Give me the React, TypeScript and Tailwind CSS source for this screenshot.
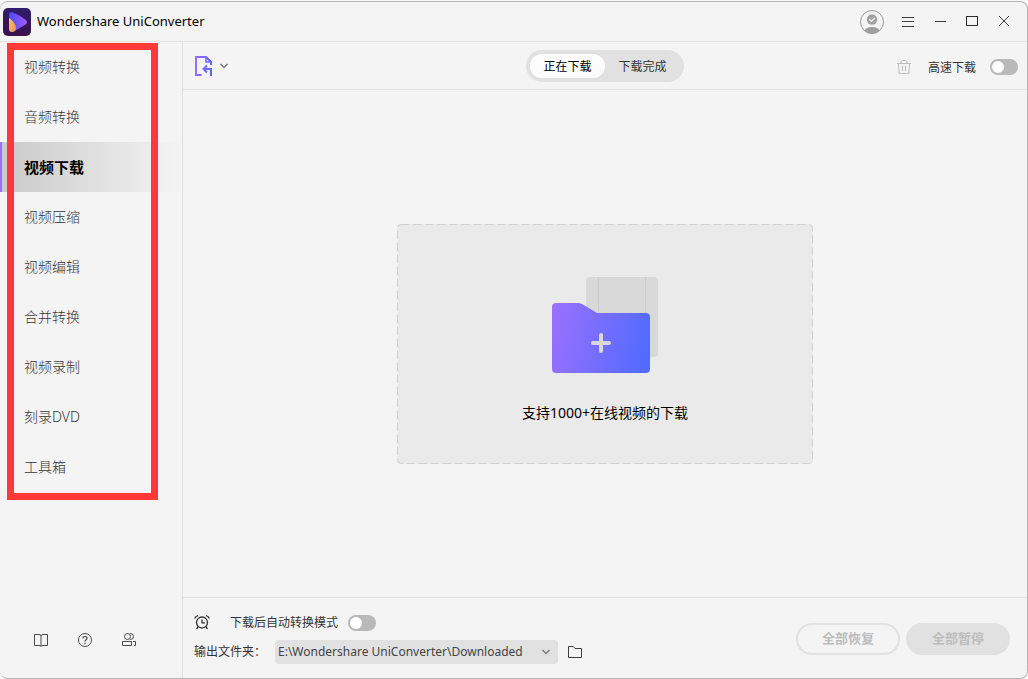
import { useState } from "react";

const NAV_ITEMS = [
  "视频转换",
  "音频转换",
  "视频下载",
  "视频压缩",
  "视频编辑",
  "合并转换",
  "视频录制",
  "刻录DVD",
  "工具箱",
];

const Logo = () => (
  <svg width="28" height="28" viewBox="0 0 28 28" aria-hidden="true">
    <defs>
      <linearGradient id="logoBg" x1="0" y1="0" x2="0" y2="1">
        <stop offset="0" stopColor="#2f1c6c" />
        <stop offset="1" stopColor="#3a124a" />
      </linearGradient>
      <linearGradient id="logoPlay" x1="0" y1="0" x2="1" y2="0">
        <stop offset="0" stopColor="#4a4bf5" />
        <stop offset="1" stopColor="#a45cff" />
      </linearGradient>
      <linearGradient id="logoDrop" x1="0" y1="0" x2="1" y2="1">
        <stop offset="0" stopColor="#ffc46b" />
        <stop offset="1" stopColor="#f09050" />
      </linearGradient>
    </defs>
    <rect width="28" height="28" rx="5" fill="url(#logoBg)" />
    <path d="M8 4.200Q6 4.200 6 7v14.500Q6 24 8.500 24q1.500 0 4-1.400L22.600 16.500q2.800-2.300 0-4.700Q16 7 10 4.600 9 4.200 8 4.200Z" fill="url(#logoPlay)" />
    <path d="M6 10c3 2 7 6.500 7 10 0 2.500-1.700 4-3.700 4-2.200 0-3.300-1.300-3.300-3.500Z" fill="url(#logoDrop)" />
  </svg>
);

const Avatar = () => (
  <svg width="24" height="24" viewBox="0 0 24 24" aria-hidden="true">
    <defs>
      <clipPath id="avatarClip">
        <circle cx="12" cy="12" r="11.500" />
      </clipPath>
    </defs>
    <g clipPath="url(#avatarClip)" fill="#a0a0a0">
      <circle cx="12" cy="9.500" r="5.200" />
      <ellipse cx="12" cy="22" rx="8" ry="5" />
    </g>
    <path d="m9.300 9.300 2.200 2 3.500-3.200" fill="none" stroke="#f4f4f4" strokeWidth="1.300" />
    <circle cx="12" cy="12" r="11.500" fill="none" stroke="#999" />
  </svg>
);

const AddFile = () => (
  <svg width="18" height="22" viewBox="0 0 18 22" fill="none" strokeWidth="2" aria-hidden="true">
    <defs>
      <linearGradient id="fileStroke" x1="0" y1="0" x2="18" y2="0" gradientUnits="userSpaceOnUse">
        <stop offset="0" stopColor="#9a70ff" />
        <stop offset="1" stopColor="#5a62fa" />
      </linearGradient>
    </defs>
    <g stroke="url(#fileStroke)">
      <path d="M6.500 20H1V2h10l5 5v3" />
      <path d="M11 2v5h5" strokeWidth="1.500" />
      <path d="m12 10.500-3.500 3.500 3.500 3.500M9 14h7v7" />
    </g>
  </svg>
);

const Chevron = () => (
  <svg width="8" height="6" viewBox="0 0 8 6" fill="none" stroke="#7a7a7a" strokeWidth="1.500" aria-hidden="true">
    <path d="m.5 1 3.500 3.500L7.500 1" />
  </svg>
);

const Trash = () => (
  <svg width="14" height="14" viewBox="0 0 14 14" fill="none" stroke="#bdbdbd" aria-hidden="true">
    <path d="M0 3.500h14M4 3.500V2q0-1.500 1.500-1.500h3Q10 .5 10 2v1.500M1.500 3.500l.6 10h9.800l.6-10M5.500 6v5M8.500 6v5" />
  </svg>
);

const Clock = () => (
  <svg width="16" height="16" viewBox="0 0 16 16" fill="none" stroke="#333" strokeWidth="1.300" aria-hidden="true">
    <circle cx="8" cy="7.500" r="5.500" />
    <path d="M8 4.500v3.300h3M.7 3.500Q1.500 1.300 4 .7M15.300 3.500Q14.500 1.300 12 .7M4.300 11.500 2.500 14M11.700 11.500l1.800 2.500" />
  </svg>
);

const Book = () => (
  <svg width="14" height="14" viewBox="0 0 14 14" fill="none" stroke="#4a4a4a" aria-hidden="true">
    <path d="M.5 1.500H5q2 0 2 1.500 0-1.500 2-1.500h4.500v11H9q-2 0-2 1 0-1-2-1H.5ZM7 3v10" />
  </svg>
);

const Help = () => (
  <svg width="14" height="14" viewBox="0 0 14 14" fill="none" stroke="#4a4a4a" aria-hidden="true">
    <circle cx="7" cy="7" r="6.500" />
    <path d="M5 5.500q0-2 2-2t2 1.800C9 6.700 7 6.700 7 8.500M7 9.800v1.400" strokeWidth="1.200" />
  </svg>
);

const Users = () => (
  <svg width="14" height="14" viewBox="0 0 14 14" fill="none" stroke="#4a4a4a" aria-hidden="true">
    <circle cx="5.500" cy="3.500" r="3" />
    <path d="M8 .5h.5a3 3 0 0 1 0 6H8M.5 12.500v-4h9v4ZM11 8.500h2.500v4H12" />
  </svg>
);

const FolderOutline = () => (
  <svg width="14" height="12" viewBox="0 0 14 12" fill="none" stroke="#3f3f3f" aria-hidden="true">
    <path d="M.5 11.500V.5h4.800L7 2.500h6.500v9Z" />
  </svg>
);

const FolderArt = () => (
  <svg width="106" height="96" viewBox="0 0 106 96" aria-hidden="true">
    <defs>
      <linearGradient id="folderFill" x1="0" y1="40" x2="98" y2="60" gradientUnits="userSpaceOnUse">
        <stop offset="0" stopColor="#9a70ff" />
        <stop offset="1" stopColor="#526bff" />
      </linearGradient>
    </defs>
    <rect x="34" width="72" height="80" rx="4" fill="#d8d8d8" />
    <path d="M46.500 0v80M93.500 0v80" stroke="#cccccc" />
    <path d="M4 26h22q3 0 5 1.500L45 36h49q4 0 4 4v52q0 4-4 4H4q-4 0-4-4V30q0-4 4-4Z" fill="url(#folderFill)" />
    <path d="M49 58v16M41 66h16" stroke="#d8d8d8" strokeWidth="4" strokeLinecap="round" />
  </svg>
);

type SwitchProps = { id: string };

const Switch = ({ id }: SwitchProps) => (
  <input
    id={id}
    type="checkbox"
    className="flex h-4 w-7 shrink-0 appearance-none items-center rounded-full bg-[#b9b9b9] px-0.5 before:size-3 before:rounded-full before:bg-white checked:bg-[#7c6cff] checked:before:ml-auto"
  />
);

const TitleBar = () => (
  <header className="flex h-10 shrink-0 items-center border-b border-[#e0e0e0] pr-[17px] pl-[3px]">
    <Logo />
    <h1 className="ml-1.5 text-[13px] font-normal text-black">Wondershare UniConverter</h1>
    <div className="ml-auto flex items-center">
      <button aria-label="账户"><Avatar /></button>
      <button aria-label="菜单" className="ml-[18px]">
        <svg width="12" height="12" stroke="#3c3c3c"><path d="M0 1.500h12M0 5.500h12M0 10.500h12" /></svg>
      </button>
      <button aria-label="最小化" className="ml-5">
        <svg width="12" height="12" stroke="#3c3c3c"><path d="M1 5.500h11" /></svg>
      </button>
      <button aria-label="最大化" className="ml-5">
        <svg width="12" height="12" fill="none" stroke="#2c2c2c"><rect x=".5" y=".5" width="11" height="9" /></svg>
      </button>
      <button aria-label="关闭" className="ml-5">
        <svg width="12" height="12" stroke="#3c3c3c"><path d="m1 0 10 10M11 0 1 10" /></svg>
      </button>
    </div>
  </header>
);

const Sidebar = () => {
  const [active, setActive] = useState("视频下载");

  return (
    <aside className="flex w-[183px] shrink-0 flex-col border-r border-[#e0e0e0]">
      <nav className="relative">
        <ul>
          {NAV_ITEMS.map((item) => (
            <li key={item}>
              <button
                onClick={() => setActive(item)}
                className={
                  item === active
                    ? "flex h-[50px] w-full items-center border-l-2 border-[#9370ff] bg-linear-to-r from-[#cacaca] to-[#f4f4f4] pl-[22px] text-[15px] font-bold text-black"
                    : "flex h-[50px] w-full items-center pl-6 text-sm font-light text-[#333]"
                }
              >
                {item}
              </button>
            </li>
          ))}
        </ul>
        {/* highlight frame */}
        <div className="pointer-events-none absolute top-px -bottom-2 left-[7px] w-[151px] border-[7px] border-[#ff3838]" />
      </nav>
      <div className="mt-auto flex gap-[30px] pb-[31px] pl-[34px]">
        <button aria-label="用户指南"><Book /></button>
        <button aria-label="帮助"><Help /></button>
        <button aria-label="社区"><Users /></button>
      </div>
    </aside>
  );
};

const Toolbar = () => (
  <div className="grid h-12 shrink-0 grid-cols-[1fr_auto_1fr] items-center border-b border-[#e0e0e0] px-[9px] text-xs">
    <button aria-label="添加下载" className="flex items-center gap-[7px] pl-[3px]">
      <AddFile />
      <Chevron />
    </button>
    <div className="flex h-8 items-center rounded-full bg-[#e1e1e1] p-1">
      <button className="h-6 w-[75px] rounded-full bg-[#fcfcfc] pt-0.5 text-black">正在下载</button>
      <button className="h-6 w-[75px] pt-0.5 text-[#333]">下载完成</button>
    </div>
    <div className="flex items-center justify-end pt-0.5">
      <button aria-label="删除"><Trash /></button>
      <label htmlFor="fast" className="mr-3.5 ml-[17px] pt-0.5 text-[#333]">高速下载</label>
      <Switch id="fast" />
    </div>
  </div>
);

const DropZone = () => (
  <button className="relative flex h-60 w-[416px] flex-col items-center rounded bg-[#eaeaea] pt-[53px] text-sm font-normal text-black">
    <svg className="absolute inset-0 size-full" fill="none" stroke="#cfcfcf" aria-hidden="true">
      <rect x=".5" y=".5" width="415" height="239" rx="4" strokeDasharray="8 4" />
    </svg>
    <FolderArt />
    <span className="mt-[30px]">支持1000+在线视频的下载</span>
  </button>
);

const Footer = () => (
  <footer className="flex shrink-0 items-center justify-between border-t border-[#e0e0e0] pt-[13px] pr-[17px] pb-3.5 pl-[11px] text-xs text-[#333]">
    <div className="flex flex-col gap-[5px]">
      <div className="flex h-6 items-center">
        <Clock />
        <label htmlFor="convert" className="mr-2.5 ml-5">下载后自动转换模式</label>
        <Switch id="convert" />
      </div>
      <div className="flex h-6 items-center">
        <label htmlFor="folder" className="w-[81px]">输出文件夹：</label>
        <div className="relative">
          <select
            id="folder"
            className="h-6 w-[283px] appearance-none rounded bg-[#e1e1e1] pl-[3px] text-xs text-[#444]"
          >
            <option>E:\Wondershare UniConverter\Downloaded</option>
          </select>
          <span className="pointer-events-none absolute inset-y-0 right-2 flex items-center">
            <Chevron />
          </span>
        </div>
        <button aria-label="打开文件夹" className="ml-2.5"><FolderOutline /></button>
      </div>
    </div>
    <div className="flex gap-1.5 pt-0.5 text-[13px] font-bold text-[#bdbdbd]">
      <button className="h-8 w-[104px] rounded-full border-2 border-[#e1e1e1]">全部恢复</button>
      <button className="h-8 w-[104px] rounded-full bg-[#e1e1e1]">全部暂停</button>
    </div>
  </footer>
);

export default function App() {
  return (
    <div className="flex min-h-screen bg-[#f9f9f9] pt-px font-['Noto_Sans','Noto_Sans_CJK_SC',sans-serif]">
      <div className="flex flex-1 flex-col rounded-lg border-t border-r border-b border-[#b4b4b4] bg-[#f4f4f4]">
        <TitleBar />
        <div className="flex flex-1">
          <Sidebar />
          <div className="flex min-w-0 flex-1 flex-col">
            <Toolbar />
            <main className="flex flex-1 items-center justify-center">
              <DropZone />
            </main>
            <Footer />
          </div>
        </div>
      </div>
    </div>
  );
}
